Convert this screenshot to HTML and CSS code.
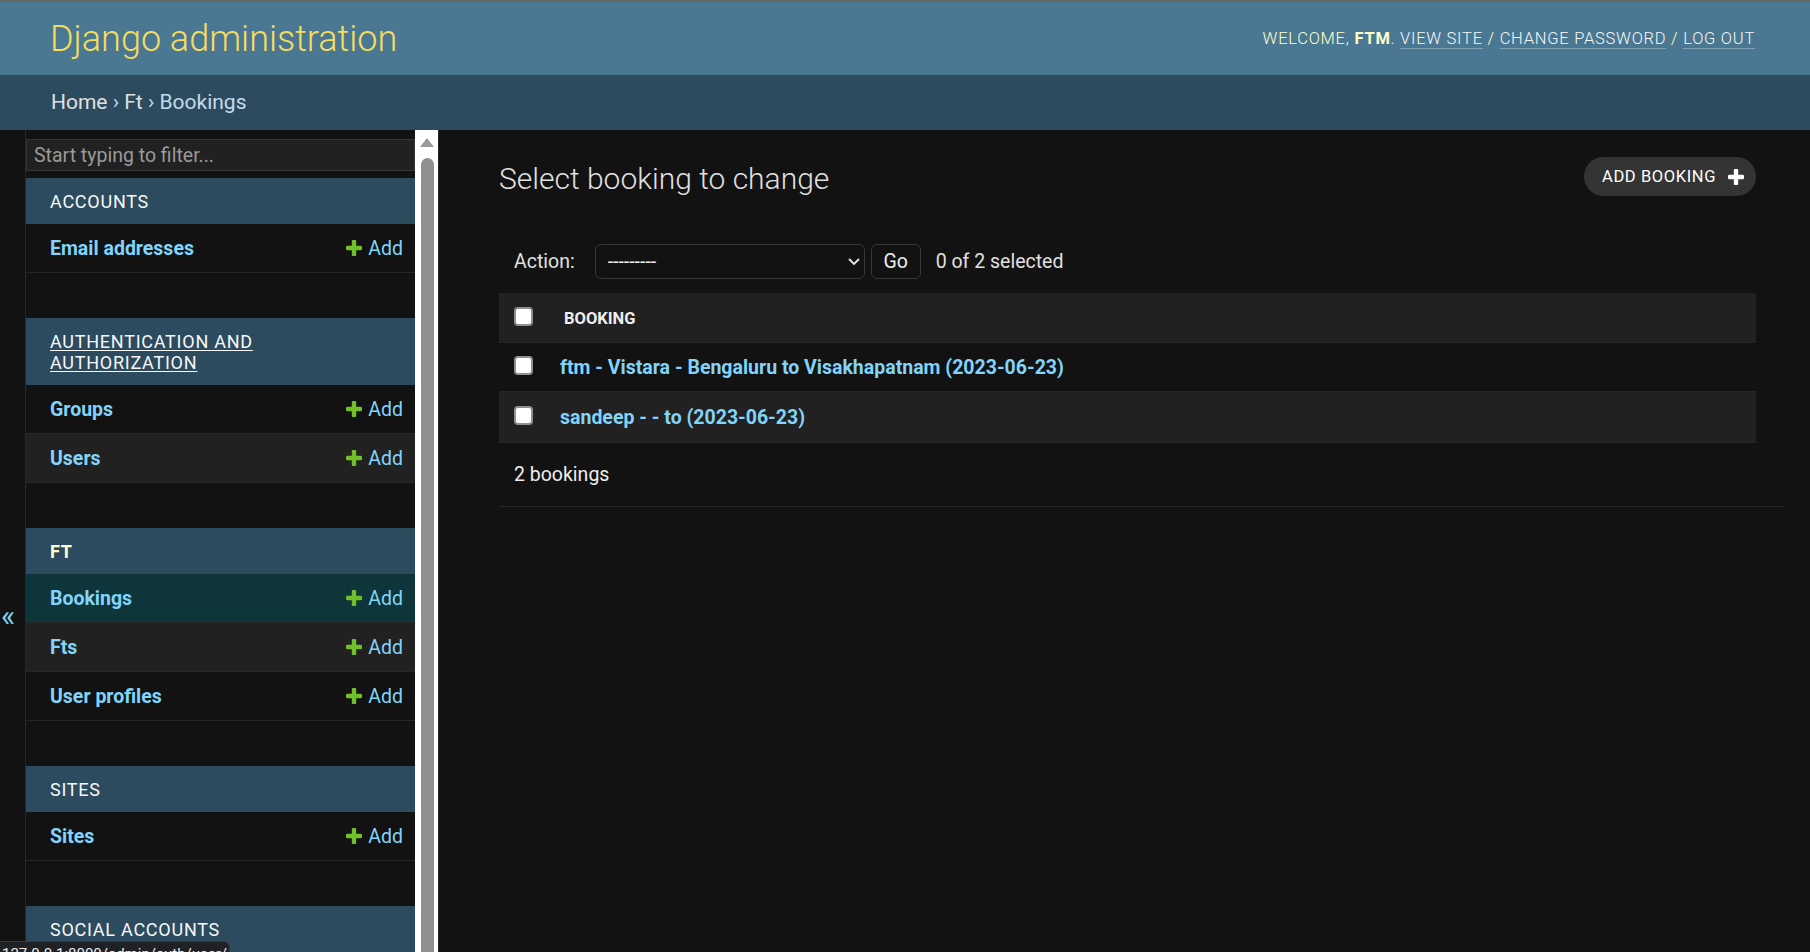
FILE: index.html
```html
<!DOCTYPE html>
<html lang="en">
<head>
<meta charset="utf-8">
<title>Select booking to change | Django site admin</title>
<link rel="stylesheet" href="styles.css">
</head>
<body>
<div class="container">
  <header class="header">
    <h1 class="site-name">Django administration</h1>
    <div class="user-tools">Welcome, <strong>ftm</strong>. <a href="#">View site</a> / <a href="#">Change password</a> / <a href="#">Log out</a></div>
  </header>
  <nav class="breadcrumbs"><a href="#">Home</a> › <a href="#">Ft</a> › Bookings</nav>
  <div class="main">
    <div class="toggle-nav" role="button">«</div>
    <aside class="nav-sidebar">
      <div class="nav-scroll">
        <input class="nav-filter" type="search" placeholder="Start typing to filter...">
        <div class="module">
          <div class="caption">Accounts</div>
          <div class="row"><a class="name" href="#">Email addresses</a><a class="addlink" href="#"><svg viewBox="192 188 1408 1408"><path fill="#70bf2b" d="M1600 796v192q0 40-28 68t-68 28h-416v416q0 40-28 68t-68 28h-192q-40 0-68-28t-28-68v-416h-416q-40 0-68-28t-28-68v-192q0-40 28-68t68-28h416v-416q0-40 28-68t68-28h192q40 0 68 28t28 68v416h416q40 0 68 28t28 68z"/></svg>Add</a></div>
        </div>
        <div class="module">
          <div class="caption"><a href="#">Authentication and<br>authorization</a></div>
          <div class="row"><a class="name" href="#">Groups</a><a class="addlink" href="#"><svg viewBox="192 188 1408 1408"><path fill="#70bf2b" d="M1600 796v192q0 40-28 68t-68 28h-416v416q0 40-28 68t-68 28h-192q-40 0-68-28t-28-68v-416h-416q-40 0-68-28t-28-68v-192q0-40 28-68t68-28h416v-416q0-40 28-68t68-28h192q40 0 68 28t28 68v416h416q40 0 68 28t28 68z"/></svg>Add</a></div>
          <div class="row alt"><a class="name" href="#">Users</a><a class="addlink" href="#"><svg viewBox="192 188 1408 1408"><path fill="#70bf2b" d="M1600 796v192q0 40-28 68t-68 28h-416v416q0 40-28 68t-68 28h-192q-40 0-68-28t-28-68v-416h-416q-40 0-68-28t-28-68v-192q0-40 28-68t68-28h416v-416q0-40 28-68t68-28h192q40 0 68 28t28 68v416h416q40 0 68 28t28 68z"/></svg>Add</a></div>
        </div>
        <div class="module">
          <div class="caption current">Ft</div>
          <div class="row selected"><a class="name" href="#">Bookings</a><a class="addlink" href="#"><svg viewBox="192 188 1408 1408"><path fill="#70bf2b" d="M1600 796v192q0 40-28 68t-68 28h-416v416q0 40-28 68t-68 28h-192q-40 0-68-28t-28-68v-416h-416q-40 0-68-28t-28-68v-192q0-40 28-68t68-28h416v-416q0-40 28-68t68-28h192q40 0 68 28t28 68v416h416q40 0 68 28t28 68z"/></svg>Add</a></div>
          <div class="row alt"><a class="name" href="#">Fts</a><a class="addlink" href="#"><svg viewBox="192 188 1408 1408"><path fill="#70bf2b" d="M1600 796v192q0 40-28 68t-68 28h-416v416q0 40-28 68t-68 28h-192q-40 0-68-28t-28-68v-416h-416q-40 0-68-28t-28-68v-192q0-40 28-68t68-28h416v-416q0-40 28-68t68-28h192q40 0 68 28t28 68v416h416q40 0 68 28t28 68z"/></svg>Add</a></div>
          <div class="row"><a class="name" href="#">User profiles</a><a class="addlink" href="#"><svg viewBox="192 188 1408 1408"><path fill="#70bf2b" d="M1600 796v192q0 40-28 68t-68 28h-416v416q0 40-28 68t-68 28h-192q-40 0-68-28t-28-68v-416h-416q-40 0-68-28t-28-68v-192q0-40 28-68t68-28h416v-416q0-40 28-68t68-28h192q40 0 68 28t28 68v416h416q40 0 68 28t28 68z"/></svg>Add</a></div>
        </div>
        <div class="module">
          <div class="caption">Sites</div>
          <div class="row"><a class="name" href="#">Sites</a><a class="addlink" href="#"><svg viewBox="192 188 1408 1408"><path fill="#70bf2b" d="M1600 796v192q0 40-28 68t-68 28h-416v416q0 40-28 68t-68 28h-192q-40 0-68-28t-28-68v-416h-416q-40 0-68-28t-28-68v-192q0-40 28-68t68-28h416v-416q0-40 28-68t68-28h192q40 0 68 28t28 68v416h416q40 0 68 28t28 68z"/></svg>Add</a></div>
        </div>
        <div class="module">
          <div class="caption">Social accounts</div>
          <div class="row"><a class="name" href="#">Social accounts</a><a class="addlink" href="#"><svg viewBox="192 188 1408 1408"><path fill="#70bf2b" d="M1600 796v192q0 40-28 68t-68 28h-416v416q0 40-28 68t-68 28h-192q-40 0-68-28t-28-68v-416h-416q-40 0-68-28t-28-68v-192q0-40 28-68t68-28h416v-416q0-40 28-68t68-28h192q40 0 68 28t28 68v416h416q40 0 68 28t28 68z"/></svg>Add</a></div>
        </div>
      </div>
      <div class="fake-scrollbar">
        <svg class="sb-arrow" viewBox="0 0 14 9"><path d="M7 0 L14 9 L0 9 Z" fill="#9a9a9a"/></svg>
        <div class="sb-thumb"></div>
      </div>
    </aside>
    <main class="content">
      <div class="content-head">
        <h1 class="page-title">Select booking to change</h1>
        <a class="add-button" href="#">Add booking<svg viewBox="192 188 1408 1408"><path fill="#ffffff" d="M1600 796v192q0 40-28 68t-68 28h-416v416q0 40-28 68t-68 28h-192q-40 0-68-28t-28-68v-416h-416q-40 0-68-28t-28-68v-192q0-40 28-68t68-28h416v-416q0-40 28-68t68-28h192q40 0 68 28t28 68v416h416q40 0 68 28t28 68z"/></svg></a>
      </div>
      <div class="actions">
        <label class="action-label">Action:</label>
        <div class="select-wrap">
          <select class="action-select"><option>---------</option></select>
          <svg class="chev" viewBox="0 0 12 7"><path d="M1 1 L6 6 L11 1" fill="none" stroke="#e6e6e6" stroke-width="1.8"/></svg>
        </div>
        <button class="go-button" type="button">Go</button>
        <span class="action-counter">0 of 2 selected</span>
      </div>
      <table class="results">
        <thead>
          <tr><th class="cb-col"><input class="cb" type="checkbox"></th><th class="head-text">Booking</th></tr>
        </thead>
        <tbody>
          <tr class="r1"><td class="cb-col"><input class="cb" type="checkbox"></td><td><a class="obj-link" href="#">ftm - Vistara - Bengaluru to Visakhapatnam (2023-06-23)</a></td></tr>
          <tr class="r2"><td class="cb-col"><input class="cb" type="checkbox"></td><td><a class="obj-link" href="#">sandeep - - to (2023-06-23)</a></td></tr>
        </tbody>
      </table>
      <p class="paginator">2 bookings</p>
    </main>
  </div>
</div>
<div class="status-bubble">127.0.0.1:8000/admin/auth/user/</div>
</body>
</html>
```

FILE: styles.css
```css
html, body {
  margin: 0;
  height: 100%;
}

body {
  background: #121212;
  color: #eeeeee;
  font-family: Roboto, "Noto Sans", "Liberation Sans", sans-serif;
  overflow: hidden;
}

.container {
  display: flex;
  flex-direction: column;
  height: 952px;
}

/* Header */
.header {
  display: flex;
  justify-content: space-between;
  align-items: center;
  height: 73px;
  flex: 0 0 73px;
  border-top: 2px solid #666666;
  background: #4a7892;
  padding: 0 55px 0 50px;
}

.site-name {
  margin: 0;
  font-size: 36px;
  font-weight: 300;
  line-height: 1;
  color: #f5dd5d;
}

.user-tools {
  font-size: 16.5px;
  font-weight: 300;
  letter-spacing: 0.75px;
  text-transform: uppercase;
  color: #ffffcc;
  white-space: nowrap;
  margin-top: -1px;
}

.user-tools strong {
  font-weight: 700;
}

.user-tools a {
  color: #f7f7f7;
  text-decoration: none;
  border-bottom: 1px solid rgba(255, 255, 255, 0.3);
}

/* Breadcrumbs */
.breadcrumbs {
  flex: 0 0 55px;
  height: 55px;
  line-height: 55px;
  padding-left: 51px;
  background: #2c4b5f;
  color: #c4dce8;
  font-size: 21px;
}

.breadcrumbs a {
  color: #e0e0e0;
  text-decoration: none;
}

/* Main */
.main {
  display: flex;
  flex: 1;
  min-height: 0;
}

.toggle-nav {
  flex: 0 0 26px;
  width: 26px;
  box-sizing: border-box;
  border-right: 1px solid #272727;
  background: #121212;
  color: #81d4fa;
  font-size: 30px;
  line-height: 1;
  padding: 471px 0 0 1px;
  cursor: pointer;
}

.nav-sidebar {
  display: flex;
  flex: 0 0 412px;
  box-sizing: border-box;
  border-right: 1px solid #272727;
  background: #121212;
}

.nav-scroll {
  width: 389px;
  overflow: hidden;
}

.nav-filter {
  display: block;
  width: 100%;
  box-sizing: border-box;
  height: 32px;
  margin: 9px 0 7px;
  padding: 2px 7px;
  border: 1px solid #353535;
  border-radius: 0;
  background: #212121;
  color: #eeeeee;
  font: 19.5px Roboto, "Noto Sans", sans-serif;
  outline: none;
  -webkit-appearance: none;
  appearance: none;
}

.nav-filter::placeholder {
  color: #9a9a9a;
}

.module {
  margin-bottom: 45px;
}

.caption {
  background: #2c4b5f;
  color: #f7f7f7;
  font-size: 18px;
  letter-spacing: 0.75px;
  line-height: 21px;
  padding: 12.5px 23px 12.5px 24px;
  text-transform: uppercase;
}

.caption a {
  color: #f7f7f7;
  text-decoration: underline;
  text-underline-offset: 2px;
}

.caption.current {
  color: #ffffcc;
  font-weight: 700;
}

.row {
  display: flex;
  justify-content: space-between;
  align-items: center;
  height: 48px;
  border-bottom: 1px solid #272727;
  padding: 0 12px 0 24px;
  background: #121212;
}

.row.alt {
  background: #212121;
}

.row.selected {
  background: #0e3539;
}

.row .name {
  color: #81d4fa;
  font-weight: 700;
  font-size: 19.5px;
  text-decoration: none;
}

.addlink {
  display: flex;
  align-items: center;
  gap: 6px;
  color: #81d4fa;
  font-size: 19.5px;
  text-decoration: none;
}

.addlink svg {
  width: 16px;
  height: 16px;
  margin-top: -1px;
}

/* Fake scrollbar */
.fake-scrollbar {
  flex: 0 0 22px;
  display: flex;
  flex-direction: column;
  align-items: center;
  background: #ffffff;
  padding: 0 4px 0 5px;
  box-sizing: border-box;
}

.sb-arrow {
  width: 14px;
  height: 9px;
  margin-top: 8px;
  flex: 0 0 9px;
}

.sb-thumb {
  flex: 1;
  width: 13px;
  margin-top: 11px;
  background: #909090;
  border-radius: 7px 7px 0 0;
}

/* Content */
.content {
  flex: 1;
  min-width: 0;
  padding: 27px 25px 0 60px;
}

.content-head {
  display: flex;
  justify-content: space-between;
  align-items: flex-start;
  height: 39px;
  margin-right: 29px;
}

.page-title {
  margin: 4px 0 0;
  font-size: 30px;
  font-weight: 300;
  line-height: 35px;
  color: #e0e0e0;
}

.add-button {
  display: flex;
  align-items: center;
  gap: 12px;
  height: 39px;
  box-sizing: border-box;
  padding: 0 12px 0 18px;
  border-radius: 20px;
  background: #343434;
  color: #ffffff;
  font-size: 16.5px;
  letter-spacing: 0.6px;
  text-transform: uppercase;
  text-decoration: none;
}

.add-button svg {
  width: 16px;
  height: 16px;
}

.actions {
  display: flex;
  align-items: center;
  margin: 33px 29px 0 0;
  padding: 15px 15px 14px;
  color: #e0e0e0;
  font-size: 19.5px;
}

.action-label {
  margin-right: 20px;
}

.select-wrap {
  position: relative;
  display: flex;
}

.action-select {
  width: 270px;
  height: 35px;
  box-sizing: border-box;
  padding: 0 30px 0 12px;
  border: 1px solid #383838;
  border-radius: 6px;
  background: #121212;
  color: #eeeeee;
  font: 19.5px Roboto, "Noto Sans", sans-serif;
  -webkit-appearance: none;
  appearance: none;
  outline: none;
}

.chev {
  position: absolute;
  right: 5px;
  top: 14px;
  width: 12px;
  height: 7px;
  pointer-events: none;
}

.go-button {
  margin-left: 6px;
  width: 50px;
  height: 35px;
  box-sizing: border-box;
  padding: 0;
  border: 1px solid #383838;
  border-radius: 6px;
  background: #121212;
  color: #eeeeee;
  font: 19.5px Roboto, "Noto Sans", sans-serif;
}

.action-counter {
  margin-left: 15px;
}

/* Results table */
.results {
  width: calc(100% - 29px);
  border-collapse: collapse;
  font-size: 19.5px;
}

.results th,
.results td {
  padding: 0;
  text-align: left;
  vertical-align: middle;
  border-bottom: 1px solid #272727;
}

.results thead tr {
  height: 49px;
  background: #212121;
}

.results tbody tr {
  height: 49px;
}

.results tr.r1 {
  background: #121212;
}

.results tr.r2 {
  height: 51px;
  background: #212121;
}

.cb-col {
  width: 61px;
  box-sizing: border-box;
  padding-left: 15px !important;
}

.cb {
  display: block;
  -webkit-appearance: none;
  appearance: none;
  width: 19px;
  height: 19px;
  margin: -2px 0 0;
  box-sizing: border-box;
  border: 2px solid #8f8f8f;
  border-radius: 4px;
  background: #ffffff;
}

.head-text {
  padding: 3px 0 0 4px !important;
  font-size: 16.5px;
  font-weight: 700;
  text-transform: uppercase;
  color: #eeeeee;
}

.obj-link {
  color: #81d4fa;
  font-weight: 700;
  text-decoration: none;
}

.results td .obj-link {
  display: inline-block;
  padding-top: 2px;
}

.paginator {
  display: flex;
  align-items: center;
  margin: 0;
  padding: 1px 0 0 15px;
  box-sizing: border-box;
  height: 64px;
  border-bottom: 1px solid #272727;
  color: #eeeeee;
  font-size: 19.5px;
}

/* Browser status bubble */
.status-bubble {
  position: fixed;
  left: 0;
  bottom: 0;
  width: 227px;
  height: 5px;
  overflow: hidden;
  box-sizing: content-box;
  background: #202124;
  border-top: 1px solid #3a3a3a;
  border-right: 1px solid #3a3a3a;
  border-top-right-radius: 6px;
  color: #e8eaed;
  font-size: 15px;
  line-height: 1;
  padding: 5px 0 0 2px;
  white-space: nowrap;
}
```
